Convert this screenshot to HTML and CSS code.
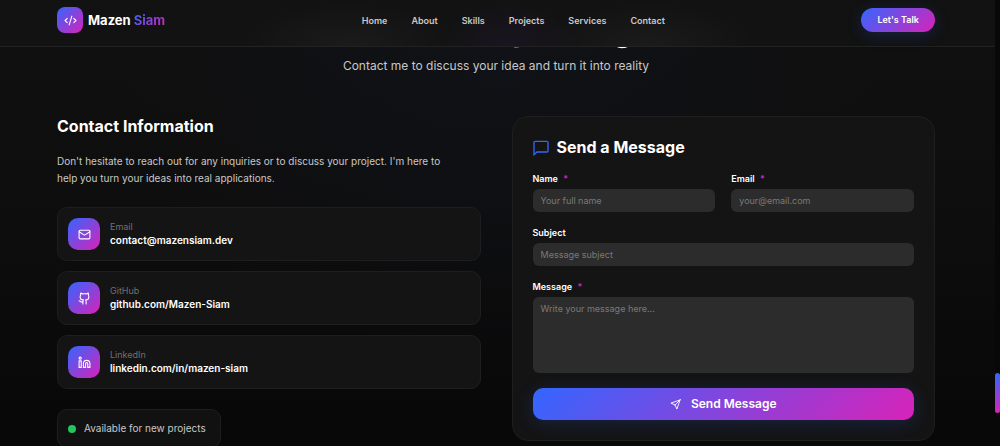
FILE: index.html
```html
<!DOCTYPE html>
<html lang="en">
<head>
<meta charset="utf-8">
<meta name="viewport" content="width=device-width, initial-scale=1">
<title>Mazen Siam</title>
<link rel="stylesheet" href="styles.css">
</head>
<body>
<header class="header">
  <div class="container header-row">
    <a class="brand" href="#">
      <span class="tile tile-small"><svg class="icon icon-code" viewBox="0 0 24 24"><path d="m18 16 4-4-4-4M6 8l-4 4 4 4M14.5 4l-5 16"/></svg></span>
      <span>Mazen <span class="gradient-text">Siam</span></span>
    </a>
    <nav class="nav">
      <a href="#">Home</a>
      <a href="#">About</a>
      <a href="#">Skills</a>
      <a href="#">Projects</a>
      <a href="#">Services</a>
      <a href="#">Contact</a>
    </nav>
    <button class="talk" type="button">Let's Talk</button>
  </div>
</header>
<main class="container">
  <section class="intro">
    <h1 class="title">Let's Start a <span class="gradient-text">Project</span> Together</h1>
    <p class="subtitle">Contact me to discuss your idea and turn it into reality</p>
  </section>
  <div class="columns">
    <section class="info">
      <h2 class="heading">Contact Information</h2>
      <p class="lead">Don't hesitate to reach out for any inquiries or to discuss your project. I'm here to help you turn your ideas into real applications.</p>
      <div class="links">
        <a class="link-card" href="mailto:contact@mazensiam.dev">
          <span class="tile"><svg class="icon" viewBox="0 0 24 24"><rect x="2" y="4" width="20" height="16" rx="2"/><path d="m22 7-8.97 5.7a1.94 1.94 0 0 1-2.06 0L2 7"/></svg></span>
          <span class="link-text"><span class="link-label">Email</span><span class="link-value">contact@mazensiam.dev</span></span>
        </a>
        <a class="link-card" href="#">
          <span class="tile"><svg class="icon" viewBox="0 0 24 24"><path d="M15 22v-4a4.8 4.8 0 0 0-1-3.5c3 0 6-2 6-5.5.08-1.25-.27-2.48-1-3.5.28-1.15.28-2.35 0-3.5 0 0-1 0-3 1.5-2.64-.5-5.36-.5-8 0C6 2 5 2 5 2c-.3 1.15-.3 2.35 0 3.5A5.4 5.4 0 0 0 4 9c0 3.5 3 5.5 6 5.5-.39.49-.68 1.05-.85 1.65S8.93 17.38 9 18v4"/><path d="M9 18c-4.51 2-5-2-7-2"/></svg></span>
          <span class="link-text"><span class="link-label">GitHub</span><span class="link-value">github.com/Mazen-Siam</span></span>
        </a>
        <a class="link-card" href="#">
          <span class="tile"><svg class="icon" viewBox="0 0 24 24"><path d="M16 8a6 6 0 0 1 6 6v7h-4v-7a2 2 0 0 0-4 0v7h-4v-7a6 6 0 0 1 6-6z"/><rect x="2" y="9" width="4" height="12"/><circle cx="4" cy="4" r="2"/></svg></span>
          <span class="link-text"><span class="link-label">LinkedIn</span><span class="link-value">linkedin.com/in/mazen-siam</span></span>
        </a>
      </div>
      <p class="status"><span class="dot"></span>Available for new projects</p>
    </section>
    <form class="form-card">
      <h2 class="heading form-heading"><svg class="icon-message" viewBox="0 0 24 24"><path d="M21 2H3a1.500 1.500 0 0 0-1.500 1.500V22l4.500-4h15a1.500 1.500 0 0 0 1.500-1.500v-13A1.500 1.500 0 0 0 21 2z"/></svg>Send a Message</h2>
      <div class="field-row">
        <div class="field">
          <label for="name">Name <span class="required">*</span></label>
          <input id="name" type="text" placeholder="Your full name">
        </div>
        <div class="field">
          <label for="email">Email <span class="required">*</span></label>
          <input id="email" type="email" placeholder="your@email.com">
        </div>
      </div>
      <div class="field">
        <label for="subject">Subject</label>
        <input id="subject" type="text" placeholder="Message subject">
      </div>
      <div class="field">
        <label for="message">Message <span class="required">*</span></label>
        <textarea id="message" placeholder="Write your message here..."></textarea>
      </div>
      <button class="send" type="submit"><svg class="icon icon-send" viewBox="0 0 24 24"><path d="M22 2 15 22l-4-9-9-4 20-7zM22 2 11 13"/></svg>Send Message</button>
    </form>
  </div>
</main>
<div class="rail"><div class="rail-thumb"></div></div>
</body>
</html>
```
FILE: styles.css
```css
:root {
  --blue: #3366ff;
  --pink: #d822b8;
  --gradient: linear-gradient(135deg, var(--blue), var(--pink));
}

* {
  box-sizing: border-box;
}

html {
  scrollbar-width: none;
  background: #080809;
}

body {
  margin: 0;
  padding-right: 4px;
  color: #fff;
  font-family: Inter, "Liberation Sans", sans-serif;
  font-size: 10px;
  background:
    radial-gradient(ellipse 380px 300px at 50% 60px, rgba(20, 40, 90, 0.1), transparent),
    linear-gradient(#101010, #0e0e0e 200px, #080809 420px);
}

h1, h2, p {
  margin: 0;
}

a {
  color: inherit;
  text-decoration: none;
}

button, input, textarea {
  font: inherit;
  color: inherit;
  border: 0;
}

.container {
  padding: 0 61px 0 57px;
}

.header {
  position: sticky;
  top: 0;
  z-index: 2;
  padding: 7px 0 13px;
  border-bottom: 1px solid #222;
  background:
    radial-gradient(ellipse 110px 44px at 35% 100%, rgba(255, 255, 255, 0.04), transparent),
    radial-gradient(ellipse 110px 44px at 65% 100%, rgba(255, 255, 255, 0.04), transparent),
    radial-gradient(ellipse 70px 44px at 51% 100%, rgba(120, 60, 220, 0.08), transparent),
    #121212;
}

.header-row {
  display: flex;
  align-items: center;
  justify-content: space-between;
}

.brand {
  display: flex;
  align-items: center;
  gap: 5px;
  font-size: 13px;
  font-weight: 700;
}

.gradient-text {
  color: transparent;
  background: var(--gradient);
  background-clip: text;
}

.tile {
  display: flex;
  flex: none;
  align-items: center;
  justify-content: center;
  width: 32px;
  height: 32px;
  border-radius: 10px;
  background: var(--gradient);
}

.tile-small {
  width: 26px;
  height: 26px;
  border-radius: 8px;
}

.icon {
  width: 13px;
  height: 13px;
  fill: none;
  stroke: #fff;
  stroke-width: 2;
  stroke-linecap: round;
  stroke-linejoin: round;
}

.nav {
  display: flex;
  gap: 24px;
  color: #c8c8c8;
  font-size: 9px;
  font-weight: 600;
}

.talk {
  padding: 6px 16px;
  border-radius: 12px;
  background: var(--gradient);
  box-shadow: 0 3px 16px rgba(51, 102, 255, 0.2);
  font-size: 9px;
  font-weight: 600;
  line-height: 12px;
}

.intro {
  margin-top: -36px;
  text-align: center;
}

.title {
  font-size: 30px;
  font-weight: 700;
  line-height: 40px;
}

.title .gradient-text {
  background-image: linear-gradient(90deg, #6a4be8, var(--pink));
}

.subtitle {
  padding-top: 6px;
  color: #c8c8c8;
  font-size: 12px;
  line-height: 18px;
}

.columns {
  display: grid;
  grid-template-columns: 1fr 1fr;
  align-items: start;
  gap: 31px;
  padding: 41px 0 5px;
}

.heading {
  font-size: 16px;
  font-weight: 700;
  line-height: 21px;
}

.lead {
  padding: 16px 20px 20px 0;
  color: #c8c8c8;
  font-size: 10px;
  line-height: 17px;
}

.links {
  display: grid;
  gap: 10px;
}

.link-card {
  display: flex;
  align-items: center;
  gap: 10px;
  padding: 10px;
  min-height: 54px;
  border: 1px solid #1e1e1e;
  border-radius: 10px;
  background: #141414;
}

.link-text {
  display: grid;
}

.link-label {
  color: #707070;
  font-size: 9px;
  line-height: 13px;
}

.link-value {
  font-size: 10px;
  font-weight: 600;
  line-height: 15px;
}

.status {
  display: inline-flex;
  align-items: center;
  gap: 8px;
  margin-top: 20px;
  padding: 10px 14px 10px 10px;
  border: 1px solid #1e1e1e;
  border-radius: 10px;
  background: #111;
  color: #c8c8c8;
  font-size: 10px;
  line-height: 17px;
}

.dot {
  width: 8px;
  height: 8px;
  border-radius: 50%;
  background: #22c55e;
}

.form-card {
  display: grid;
  gap: 15px;
  padding: 20px;
  border: 1px solid #1e1e1e;
  border-radius: 16px;
  background: #141414;
}

.form-heading {
  display: flex;
  align-items: center;
  gap: 8px;
}

.icon-message {
  width: 16px;
  height: 16px;
  fill: none;
  stroke: var(--blue);
  stroke-width: 2;
}

.field-row {
  display: grid;
  grid-template-columns: 1fr 1fr;
  gap: 16px;
}

.field {
  display: grid;
  gap: 4px;
}

.field label {
  font-size: 9px;
  font-weight: 600;
  line-height: 12px;
}

.required {
  margin-left: 3px;
  color: #c026d3;
}

.field input,
.field textarea {
  display: block;
  width: 100%;
  padding: 6px 8px 5px;
  border-radius: 6px;
  background: #2c2c2c;
  font-size: 9px;
  line-height: 12px;
}

.field textarea {
  height: 76px;
  resize: none;
}

.field ::placeholder {
  color: #7a7a7a;
}

.send {
  display: flex;
  align-items: center;
  justify-content: center;
  gap: 10px;
  padding: 8px;
  border-radius: 10px;
  background: var(--gradient);
  box-shadow: 0 3px 18px rgba(51, 102, 255, 0.2);
  font-size: 12px;
  font-weight: 600;
  line-height: 16px;
}

.icon-send {
  width: 11px;
  height: 11px;
}

.rail {
  position: fixed;
  top: 0;
  right: 0;
  bottom: 0;
  z-index: 3;
  width: 5px;
  background: #080808;
}

.rail-thumb {
  position: absolute;
  bottom: 33px;
  width: 5px;
  height: 40px;
  border-radius: 3px;
  background: linear-gradient(var(--blue), var(--pink));
}
```
